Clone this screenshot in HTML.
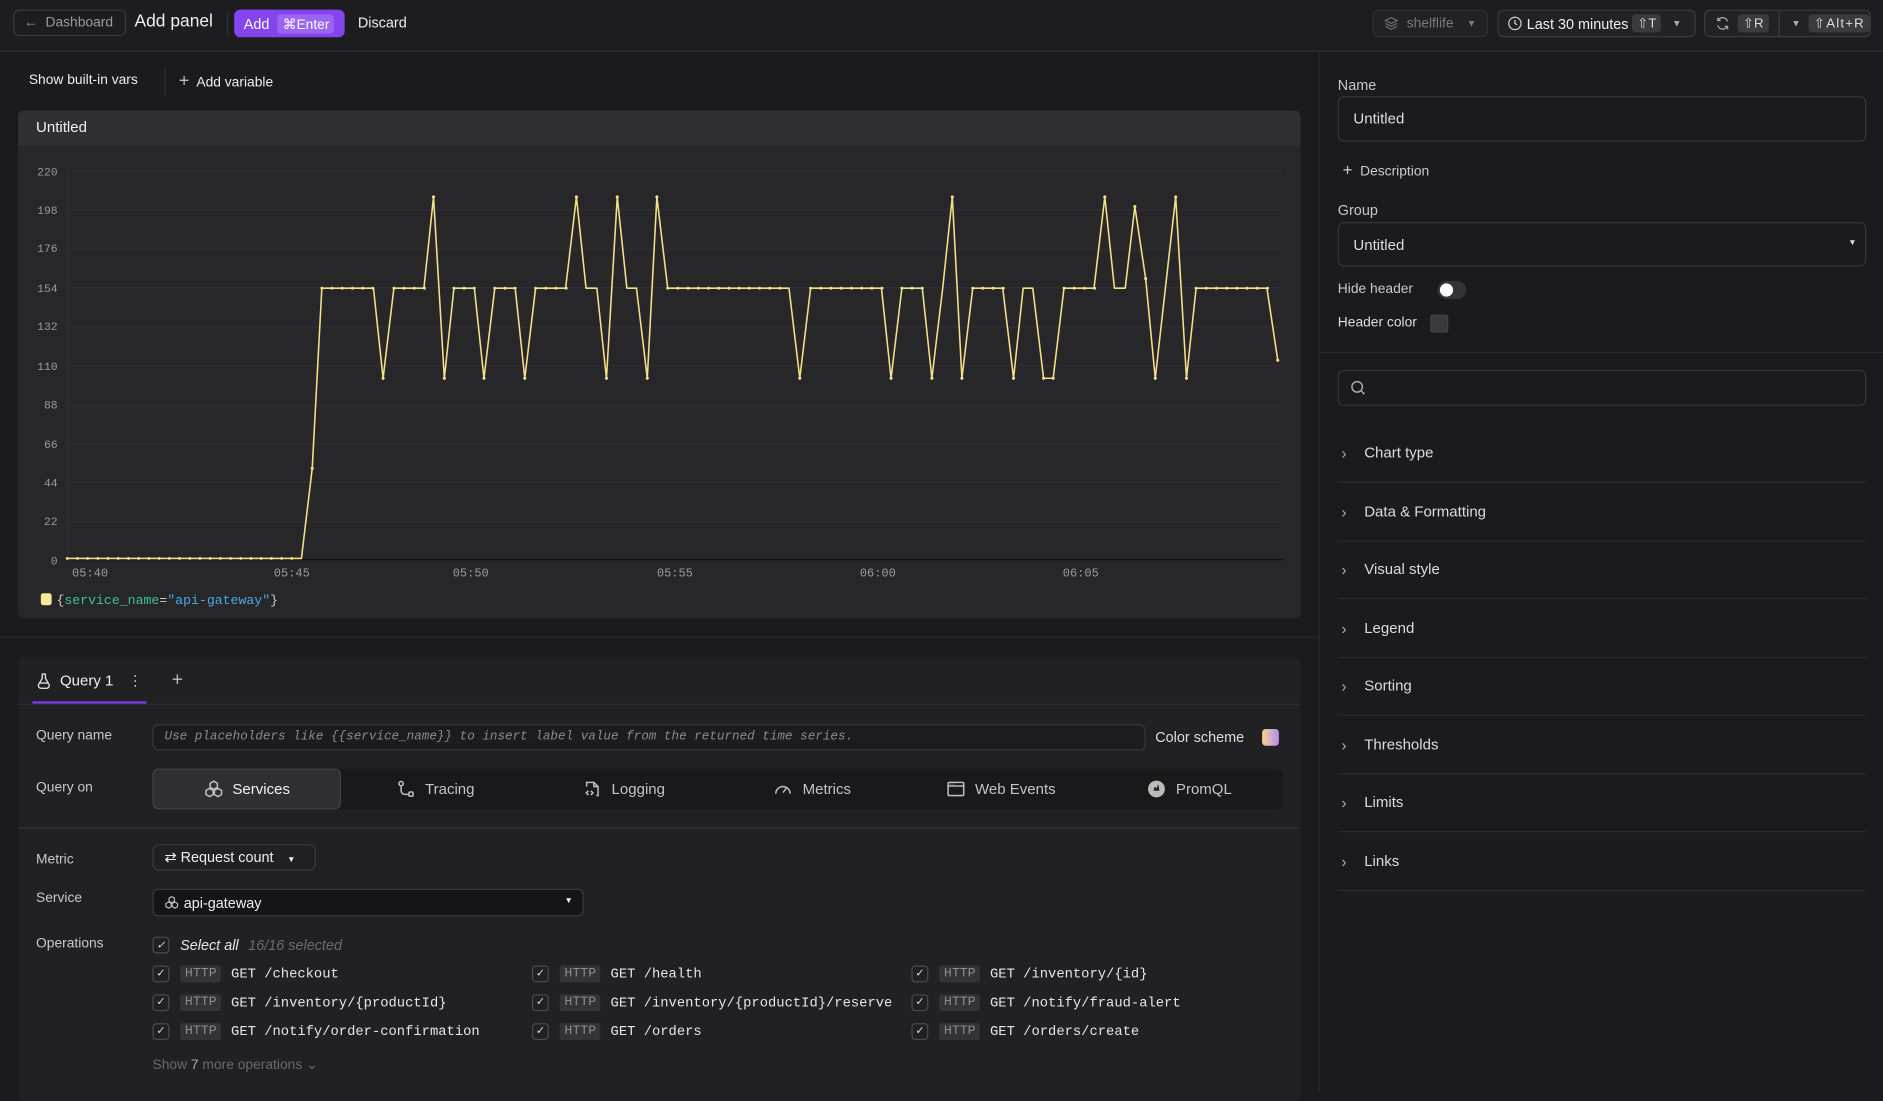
<!DOCTYPE html>
<html><head><meta charset="utf-8">
<style>
*{box-sizing:border-box;margin:0;padding:0}
html,body{width:1883px;height:1092px;overflow:hidden;background:#1b1b1e}
#root{position:absolute;left:0;top:0;width:1568px;height:909px;transform:scale(1.20089);transform-origin:0 0;background:#1b1b1e;font-family:"Liberation Sans",sans-serif;color:#e6e6e8;font-size:12px}
.a{position:absolute}
.mono{font-family:"Liberation Mono",monospace}
.btn{position:absolute;border:1px solid #3a3a3f;border-radius:5px;background:#222226;display:flex;align-items:center}
.kbd{background:#3a3a3f;border-radius:3px;padding:1px 4px;font-size:11px;color:#ddd}
.lbl{position:absolute;font-size:11.5px;color:#c8c8cc}
.acc{position:absolute;left:1114px;width:440px;height:49px;border-bottom:1px solid #2c2c30;font-size:12.5px;color:#dcdce0;display:flex;align-items:center}
.acc span.c{width:22px;color:#aaa;font-size:13px;padding-left:3px}
.op{position:absolute;display:flex;align-items:center;font-size:11.5px}
.cb{width:14px;height:14px;border:1px solid #4a4a50;border-radius:3px;margin-right:9px;display:flex;align-items:center;justify-content:center;font-size:9px;color:#ddd}
.http{background:#333338;color:#8a8a90;padding:1px 4px;border-radius:2px;margin-right:8px;font-family:"Liberation Mono",monospace;font-size:11px}
.seg{position:absolute;top:640px;height:34px;display:flex;align-items:center;justify-content:center;font-size:12.5px;color:#c4c4c8;gap:8px}
.seg svg{fill:none;stroke:#bbb;stroke-width:1.3}
</style></head><body><div id="root">
<div class="a" style="left:0;top:0;width:1568px;height:43px;border-bottom:1px solid #2e2e33;background:#1d1d20"></div>
<div class="btn" style="left:11px;top:8px;width:94px;height:22px;color:#9a9aa0;font-size:11.5px;padding-left:8px;background:#1d1d20">&#8592;&nbsp; Dashboard</div>
<div class="a" style="left:112px;top:10px;font-size:14.5px;color:#f0f0f2">Add panel</div>
<div class="a" style="left:189px;top:10px;width:1px;height:20px;background:#333"></div>
<div class="a" style="left:195px;top:8px;width:92px;height:23px;background:#8444ee;border-radius:5px;font-size:12px;color:#fff;display:flex;align-items:center;padding-left:8px">Add <span style="background:#9a65f3;border-radius:3px;padding:1px 4px;margin-left:7px;font-size:11.5px">⌘Enter</span></div>
<div class="a" style="left:298px;top:12px;font-size:12px;color:#eee">Discard</div>
<div class="btn" style="left:1143px;top:8px;width:96px;height:23px;color:#7a7a80;font-size:11.5px;padding-left:8px;border-color:#2e2e33"><svg width="13" height="13" viewBox="0 0 16 16" fill="none" stroke="#6a6a70" stroke-width="1.3"><path d="M8 2 2 5l6 3 6-3z M2 8l6 3 6-3 M2 11l6 3 6-3"/></svg>&nbsp; shelflife <span style="margin-left:11px;font-size:8px">▼</span></div>
<div class="btn" style="left:1247px;top:8px;width:165px;height:23px;font-size:12px;padding-left:7px;color:#eee"><svg width="13" height="13" viewBox="0 0 16 16" fill="none" stroke="#ccc" stroke-width="1.3"><circle cx="8" cy="8" r="6.3"/><path d="M8 4.5V8l2.3 1.5"/></svg>&nbsp;Last 30 minutes&nbsp;<span class="kbd">⇧T</span><span style="margin-left:9px;font-size:8px;color:#aaa">▼</span></div>
<div class="btn" style="left:1419px;top:8px;width:139px;height:23px;font-size:11.5px;padding-left:8px;color:#eee"><svg width="13" height="13" viewBox="0 0 16 16" fill="none" stroke="#aaa" stroke-width="1.3"><path d="M13 6A5.3 5.3 0 0 0 3.5 4.5M3 10a5.3 5.3 0 0 0 9.5 1.5M3 2v3h3M13 14v-3h-3"/></svg>&nbsp;&nbsp;<span class="kbd">⇧R</span><span style="border-left:1px solid #3a3a3f;height:21px;margin-left:8px;padding-left:10px;font-size:8px;color:#aaa;display:flex;align-items:center">▼</span><span class="kbd" style="margin-left:7px;letter-spacing:1px">⇧Alt+R</span></div>

<div class="a" style="left:24px;top:61px;font-size:11.5px;color:#eee">Show built-in vars</div>
<div class="a" style="left:137px;top:56px;width:1px;height:24px;background:#2e2e33"></div>
<div class="a" style="left:149px;top:59px;font-size:11.5px;color:#eee"><span style="font-size:15px;color:#bbb">+</span>&nbsp; Add variable</div>
<div class="a" style="left:1098px;top:43px;width:1px;height:866px;background:#2a2a2e"></div>

<div class="a" style="left:15px;top:92px;width:1068px;height:423px;background:#27272a;border-radius:5px;overflow:hidden">
 <div style="height:29px;background:#303033;font-size:12.5px;padding:7px 0 0 15px;color:#f0f0f2">Untitled</div>
</div>
<svg class="a" style="left:0;top:0" width="1098" height="520">
 <g stroke="#303034" stroke-width="1">
  <line x1="56" x2="1068" y1="142.5" y2="142.5"/><line x1="56" x2="1068" y1="174.5" y2="174.5"/><line x1="56" x2="1068" y1="207.5" y2="207.5"/><line x1="56" x2="1068" y1="239.5" y2="239.5"/><line x1="56" x2="1068" y1="272.5" y2="272.5"/><line x1="56" x2="1068" y1="304.5" y2="304.5"/><line x1="56" x2="1068" y1="337.5" y2="337.5"/><line x1="56" x2="1068" y1="369.5" y2="369.5"/><line x1="56" x2="1068" y1="401.5" y2="401.5"/><line x1="56" x2="1068" y1="434.5" y2="434.5"/>
  <line x1="56.5" x2="56.5" y1="142" y2="466"/>
 </g>
 <g font-family="Liberation Mono,monospace" font-size="9.5" fill="#9a9aa0" text-anchor="end">
  <text x="48" y="146">220</text><text x="48" y="178">198</text><text x="48" y="210">176</text><text x="48" y="243">154</text><text x="48" y="275">132</text><text x="48" y="308">110</text><text x="48" y="340">88</text><text x="48" y="373">66</text><text x="48" y="405">44</text><text x="48" y="437">22</text><text x="48" y="470">0</text>
 </g>
 <g font-family="Liberation Mono,monospace" font-size="10" fill="#9a9aa0">
  <text x="60" y="480">05:40</text><text x="228" y="480">05:45</text><text x="377" y="480">05:50</text><text x="547" y="480">05:55</text><text x="716" y="480">06:00</text><text x="885" y="480">06:05</text>
 </g>
 <line x1="56" x2="1068" y1="466" y2="466" stroke="#111" stroke-width="1"/>
 <polyline fill="none" stroke="#f5e08a" stroke-width="1.3" stroke-linejoin="round" points="56,465 251,465 260,390 268,240 311,240 319,315 328,240 353,240 361,164 370,315 378,240 395,240 403,315 412,240 429,240 437,315 446,240 471,240 480,164 488,240 497,240 505,315 514,164 522,240 530,240 539,315 547,164 556,240 657,240 666,315 675,240 734,240 742,315 751,240 768,240 776,315 785,240 793,164 801,315 810,240 835,240 844,315 852,240 860,240 869,315 877,315 886,240 911,240 920,164 928,240 937,240 945,172 954,232 962,315 979,164 988,315 996,240 1055,240 1064,300"/>
 <g stroke="#f5e08a" stroke-width="2.4" stroke-linecap="round" stroke-dasharray="0 8.5">
  <line x1="56" x2="251" y1="465" y2="465"/><line x1="268" x2="312" y1="240" y2="240"/><line x1="328" x2="354" y1="240" y2="240"/><line x1="378" x2="396" y1="240" y2="240"/><line x1="412" x2="430" y1="240" y2="240"/><line x1="446" x2="472" y1="240" y2="240"/><line x1="556" x2="658" y1="240" y2="240"/><line x1="675" x2="735" y1="240" y2="240"/><line x1="751" x2="769" y1="240" y2="240"/><line x1="810" x2="836" y1="240" y2="240"/><line x1="886" x2="912" y1="240" y2="240"/><line x1="996" x2="1056" y1="240" y2="240"/>
 </g>
 <g fill="#f5e08a"><circle cx="260" cy="390" r="1.3"/><circle cx="361" cy="164" r="1.3"/><circle cx="480" cy="164" r="1.3"/><circle cx="514" cy="164" r="1.3"/><circle cx="547" cy="164" r="1.3"/><circle cx="793" cy="164" r="1.3"/><circle cx="920" cy="164" r="1.3"/><circle cx="979" cy="164" r="1.3"/><circle cx="319" cy="315" r="1.3"/><circle cx="370" cy="315" r="1.3"/><circle cx="403" cy="315" r="1.3"/><circle cx="437" cy="315" r="1.3"/><circle cx="505" cy="315" r="1.3"/><circle cx="539" cy="315" r="1.3"/><circle cx="666" cy="315" r="1.3"/><circle cx="742" cy="315" r="1.3"/><circle cx="776" cy="315" r="1.3"/><circle cx="801" cy="315" r="1.3"/><circle cx="844" cy="315" r="1.3"/><circle cx="869" cy="315" r="1.3"/><circle cx="877" cy="315" r="1.3"/><circle cx="962" cy="315" r="1.3"/><circle cx="988" cy="315" r="1.3"/><circle cx="1064" cy="300" r="1.3"/><circle cx="945" cy="172" r="1.3"/><circle cx="954" cy="232" r="1.3"/></g>
 <rect x="34" y="494" width="9" height="10" rx="2" fill="#fbe99a"/>
 <text x="47" y="503" font-family="Liberation Mono,monospace" font-size="11" fill="#ccc">{<tspan fill="#3fc0a0">service_name</tspan>=<tspan fill="#4aa8e8">"api-gateway"</tspan>}</text>
</svg>
<div class="a" style="left:0;top:530px;width:1098px;height:1px;background:#2a2a2e"></div>

<div class="a" style="left:15px;top:547px;width:1068px;height:370px;background:#212124;border-radius:5px"></div>
<div class="a" style="left:30px;top:559px;font-size:12.5px;color:#f0f0f2;display:flex;align-items:center"><svg width="13" height="14" viewBox="0 0 14 16" fill="none" stroke="#ddd" stroke-width="1.3"><path d="M5 1.5h4M5.5 1.5v4L2 11.5a2.5 2.5 0 0 0 2.2 3.5h5.6A2.5 2.5 0 0 0 12 11.5L8.5 5.5v-4M3 10h8"/></svg>&nbsp;&nbsp;Query 1 <span style="margin-left:12px;color:#aaa">⋮</span></div>
<div class="a" style="left:143px;top:558px;font-size:16px;color:#bbb">+</div>
<div class="a" style="left:27px;top:584px;width:95px;height:2px;background:#7c3aed"></div>
<div class="a" style="left:15px;top:586px;width:1068px;height:1px;background:#303034"></div>
<div class="lbl" style="left:30px;top:607px">Query name</div>
<div class="a mono" style="left:127px;top:603px;width:827px;height:22px;border:1px solid #38383d;border-radius:5px;background:#1c1c1f;font-size:10.5px;font-style:italic;color:#8a8a90;padding:4px 0 0 9px">Use placeholders like {{service_name}} to insert label value from the returned time series.</div>
<div class="a" style="left:962px;top:607px;font-size:12px;color:#ddd">Color scheme</div>
<div class="a" style="left:1051px;top:607px;width:14px;height:14px;border-radius:3px;background:linear-gradient(90deg,#f5d58a,#b68cf2)"></div>
<div class="lbl" style="left:30px;top:650px">Query on</div>
<div class="a" style="left:127px;top:640px;width:941px;height:34px;background:#19191c;border-radius:5px"></div>
<div class="a" style="left:127px;top:640px;width:157px;height:34px;background:#2f2f33;border:1px solid #404045;border-radius:5px"></div>
<div class="seg" style="left:127px;width:157px;color:#f2f2f4"><svg width="16" height="16" viewBox="0 0 16 16"><path d="M8 1.5l3 1.7v3.4L8 8.3 5 6.6V3.2zM4.5 7.5l3 1.7v3.4l-3 1.7-3-1.7V9.2zM11.5 7.5l3 1.7v3.4l-3 1.7-3-1.7V9.2z"/></svg>Services</div>
<div class="seg" style="left:284px;width:157px"><svg width="16" height="16" viewBox="0 0 16 16"><circle cx="4" cy="3.5" r="1.8"/><rect x="10.5" y="10.5" width="3.5" height="3.5" rx="1"/><path d="M4 5.3v4.2a3 3 0 0 0 3 3h3.5"/></svg>Tracing</div>
<div class="seg" style="left:441px;width:157px"><svg width="16" height="16" viewBox="0 0 16 16"><path d="M3.5 6V2.5h6l3.5 3.5v7.5h-1.5M9.5 2.5V6H13M5 9.5l-1.8 1.8L5 13M7 9.5l1.8 1.8L7 13"/></svg>Logging</div>
<div class="seg" style="left:598px;width:157px"><svg width="16" height="16" viewBox="0 0 16 16"><path d="M2 12a6 6 0 1 1 12 0M8 11l3-4"/></svg>Metrics</div>
<div class="seg" style="left:755px;width:157px"><svg width="16" height="16" viewBox="0 0 16 16"><rect x="1.5" y="2.5" width="13" height="11" rx="1"/><path d="M1.5 5.5h13M3.5 4h.5M5.5 4h.5"/></svg>Web Events</div>
<div class="seg" style="left:912px;width:157px"><svg width="16" height="16" viewBox="0 0 16 16"><circle cx="8" cy="8" r="7" fill="#bbb" stroke="none"/><path d="M5 11h6M5.5 9.5 6.5 6 8 7.5 9.5 4l1 5.5z" fill="#222" stroke="none"/></svg>PromQL</div>
<div class="a" style="left:15px;top:689px;width:1068px;height:1px;background:#303034"></div>
<div class="lbl" style="left:30px;top:710px">Metric</div>
<div class="a" style="left:127px;top:703px;width:136px;height:22px;border:1px solid #3a3a3f;border-radius:5px;font-size:12px;padding:3px 0 0 9px;color:#eee">⇄ Request count <span style="font-size:7px;margin-left:8px">▼</span></div>
<div class="lbl" style="left:30px;top:742px">Service</div>
<div class="a" style="left:127px;top:740px;width:359px;height:23px;border:1px solid #3a3a3f;border-radius:5px;background:#151517;font-size:12px;padding:4px 0 0 9px;color:#eee;display:flex;gap:4px"><svg width="12" height="13" viewBox="0 0 16 16" fill="none" stroke="#bbb" stroke-width="1.3"><path d="M8 1.5l3 1.7v3.4L8 8.3 5 6.6V3.2zM4.5 7.5l3 1.7v3.4l-3 1.7-3-1.7V9.2zM11.5 7.5l3 1.7v3.4l-3 1.7-3-1.7V9.2z"/></svg>api-gateway<span class="a" style="right:8px;top:6px;font-size:7px">▼</span></div>
<div class="lbl" style="left:30px;top:780px">Operations</div>
<div class="op" style="left:127px;top:780px;font-style:italic;font-size:12px"><div class="cb">✓</div>Select all <span style="color:#6a6a70;margin-left:8px">16/16 selected</span></div>
<div class="op mono" style="left:127px;top:804px"><div class="cb">✓</div><span class="http">HTTP</span>GET /checkout</div>
<div class="op mono" style="left:443px;top:804px"><div class="cb">✓</div><span class="http">HTTP</span>GET /health</div>
<div class="op mono" style="left:759px;top:804px"><div class="cb">✓</div><span class="http">HTTP</span>GET /inventory/{id}</div>
<div class="op mono" style="left:127px;top:828px"><div class="cb">✓</div><span class="http">HTTP</span>GET /inventory/{productId}</div>
<div class="op mono" style="left:443px;top:828px"><div class="cb">✓</div><span class="http">HTTP</span>GET /inventory/{productId}/reserve</div>
<div class="op mono" style="left:759px;top:828px"><div class="cb">✓</div><span class="http">HTTP</span>GET /notify/fraud-alert</div>
<div class="op mono" style="left:127px;top:852px"><div class="cb">✓</div><span class="http">HTTP</span>GET /notify/order-confirmation</div>
<div class="op mono" style="left:443px;top:852px"><div class="cb">✓</div><span class="http">HTTP</span>GET /orders</div>
<div class="op mono" style="left:759px;top:852px"><div class="cb">✓</div><span class="http">HTTP</span>GET /orders/create</div>
<div class="a" style="left:127px;top:879px;font-size:11.5px;color:#6a6a70">Show <span style="color:#aaa">7</span> more operations ⌄</div>

<div class="lbl" style="left:1114px;top:64px;font-size:12px">Name</div>
<div class="a" style="left:1114px;top:80px;width:440px;height:38px;border:1px solid #35353a;border-radius:5px;font-size:12.5px;padding:11px 0 0 12px;color:#ddd">Untitled</div>
<div class="a" style="left:1118px;top:133px;font-size:11.5px;color:#ccc"><span style="font-size:14px">+</span>&nbsp; Description</div>
<div class="lbl" style="left:1114px;top:168px;font-size:12px">Group</div>
<div class="a" style="left:1114px;top:185px;width:440px;height:37px;border:1px solid #35353a;border-radius:5px;font-size:12.5px;padding:11px 0 0 12px;color:#ddd">Untitled<span class="a" style="right:7px;top:13px;font-size:7px">▼</span></div>
<div class="lbl" style="left:1114px;top:235px">Hide header</div>
<div class="a" style="left:1197px;top:234px;width:24px;height:15px;border-radius:8px;background:#333338"><div style="position:absolute;left:2px;top:2px;width:11px;height:11px;border-radius:50%;background:#fff"></div></div>
<div class="lbl" style="left:1114px;top:263px;color:#ddd">Header color</div>
<div class="a" style="left:1191px;top:262px;width:15px;height:15px;border-radius:2px;background:#3a3a3e;border:1px solid #444"></div>
<div class="a" style="left:1098px;top:293px;width:470px;height:1px;background:#2a2a2e"></div>
<div class="a" style="left:1114px;top:308px;width:440px;height:30px;border:1px solid #35353a;border-radius:5px"><svg style="position:absolute;left:9px;top:7px" width="14" height="14" viewBox="0 0 16 16" fill="none" stroke="#aaa" stroke-width="1.4"><circle cx="7" cy="7" r="5"/><path d="M11 11l3 3"/></svg></div>
<div class="acc" style="top:353px"><span class="c">›</span>Chart type</div>
<div class="acc" style="top:402px"><span class="c">›</span>Data &amp; Formatting</div>
<div class="acc" style="top:450px"><span class="c">›</span>Visual style</div>
<div class="acc" style="top:499px"><span class="c">›</span>Legend</div>
<div class="acc" style="top:547px"><span class="c">›</span>Sorting</div>
<div class="acc" style="top:596px"><span class="c">›</span>Thresholds</div>
<div class="acc" style="top:644px"><span class="c">›</span>Limits</div>
<div class="acc" style="top:693px"><span class="c">›</span>Links</div>
</div></body></html>
